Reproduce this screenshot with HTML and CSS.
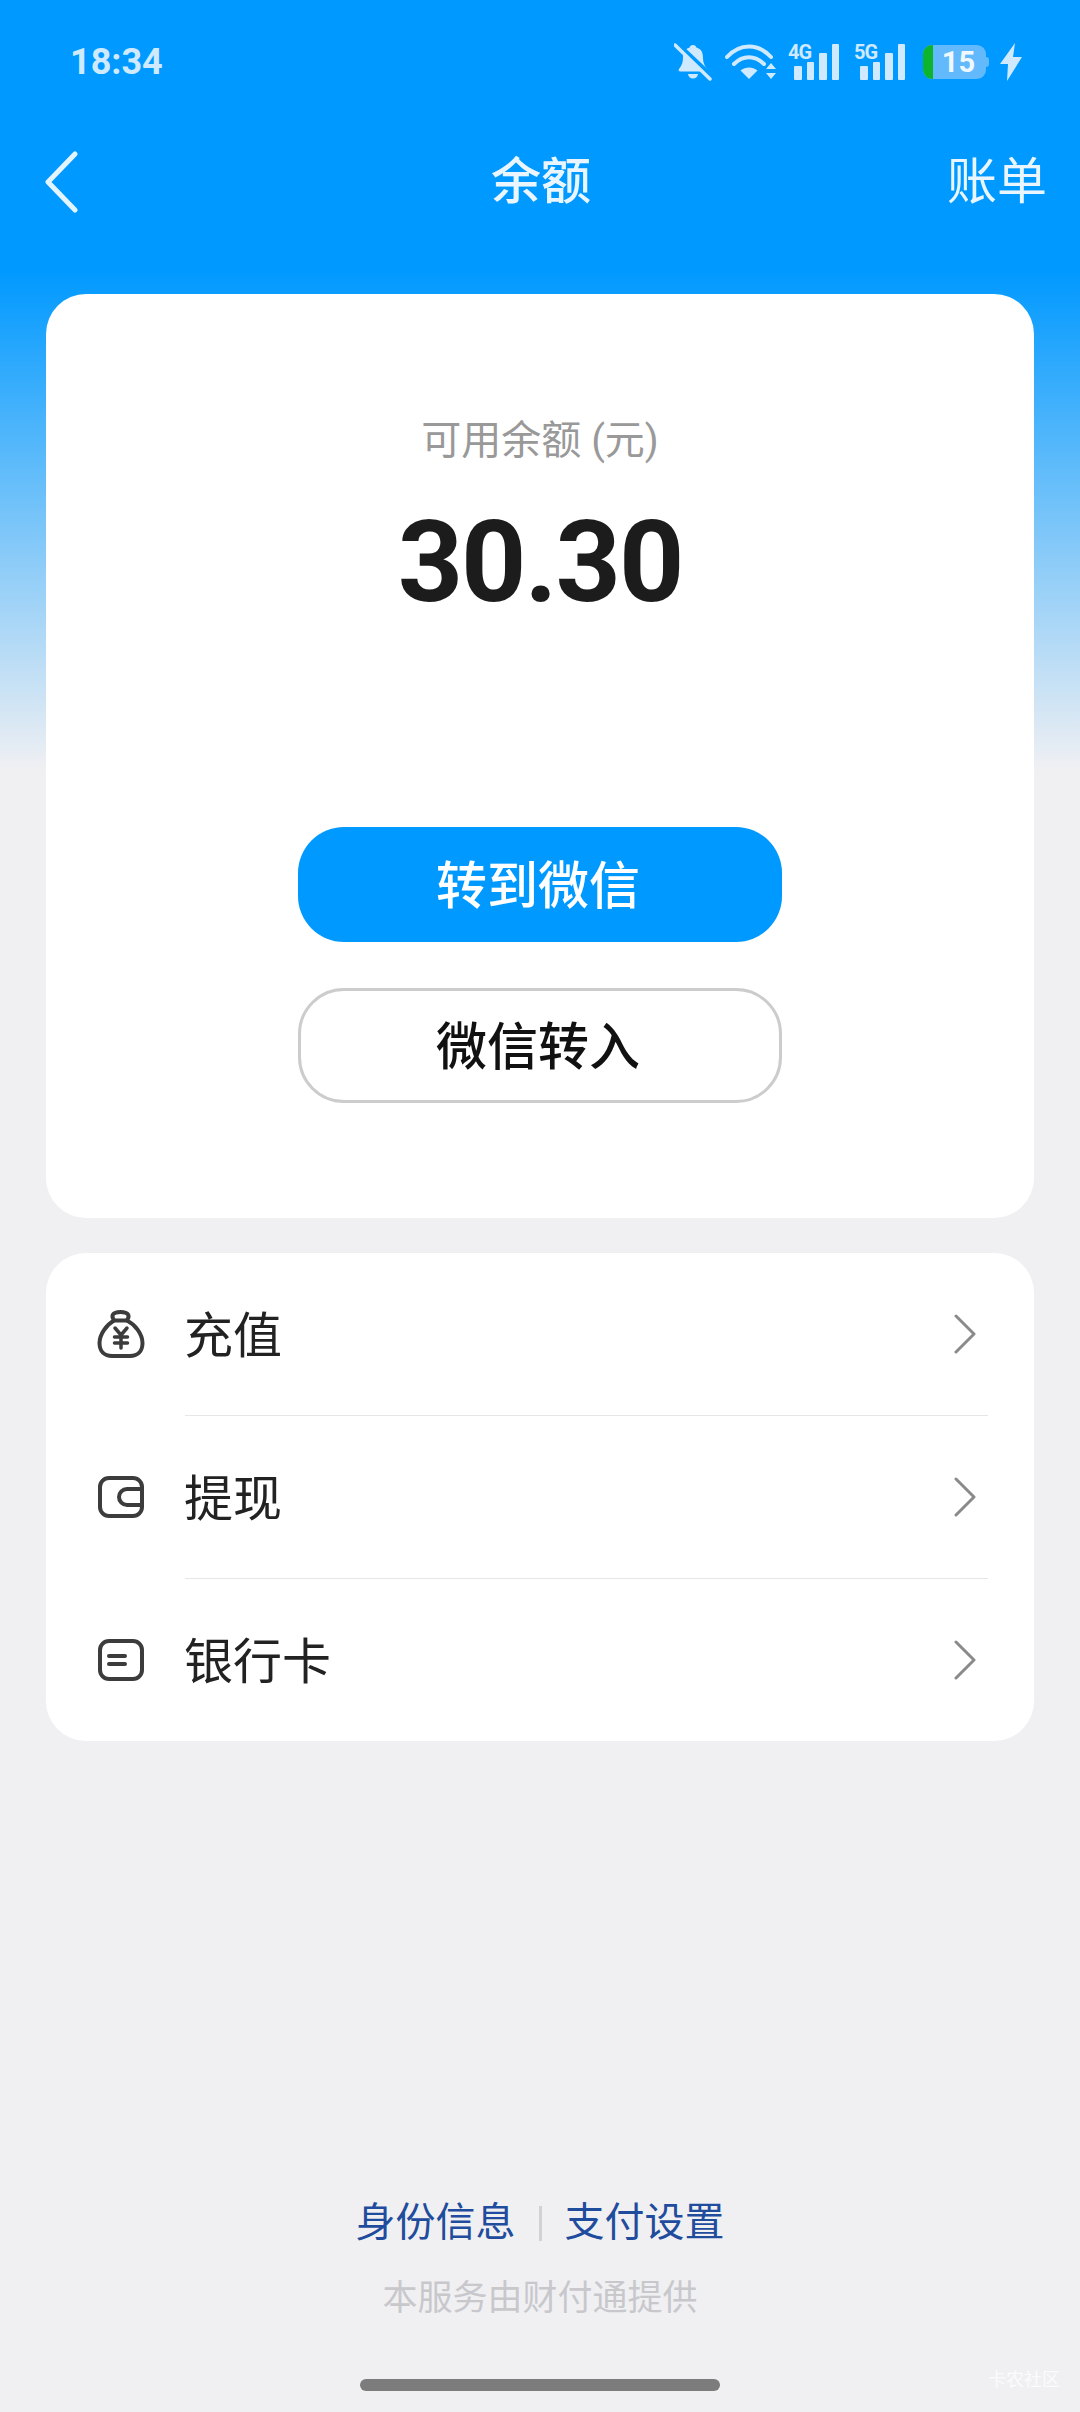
FILE: index.html
```html
<!DOCTYPE html>
<html lang="zh-CN">
<head>
    <meta charset="UTF-8">
    <meta name="viewport" content="width=device-width, initial-scale=1.0">
    <title>余额</title>
    <link rel="stylesheet" href="styles.css">
</head>
<body>
    <div class="page">
        <div class="status-bar">
            <span class="time">18:34</span>
            <div class="status-icons">
                <svg class="icon-bell" width="38" height="38" viewBox="0 0 38 38">
                    <path d="M19 2c2 0 3 1 3.400 2.600 5 1.400 6.600 5.400 6.600 10.400 0 4 1 7 4 11 1 1.500 0 2.500-1.500 2.500h-25c-1.500 0-2.500-1-1.500-2.500 3-4 4-7 4-11 0-5 1.600-9 6.600-10.400C16 3 17 2 19 2z" fill="#cfeaff"/>
                    <path d="M14 31h10c-.5 3-2.500 4.500-5 4.500s-4.500-1.500-5-4.500z" fill="#cfeaff"/>
                    <path d="M3 0l35 33" stroke="#0099ff" stroke-width="4"/>
                    <path d="M1 2l35 34" stroke="#cfeaff" stroke-width="3.500" stroke-linecap="round"/>
                </svg>
                <svg class="icon-wifi" width="52" height="36" viewBox="0 0 52 36">
                    <g fill="none" stroke="#cfeaff" stroke-width="4" stroke-linecap="round">
                        <path d="M2 13C15 -1 33 -1 46 13"/>
                        <path d="M9 20C18 11 30 11 39 20"/>
                    </g>
                    <path d="M24 35l-8.500-8.500c5-4 12-4 17 0z" fill="#cfeaff"/>
                    <path d="M46 19l5 6h-10zM46 35l5-6h-10z" fill="#cfeaff"/>
                </svg>
                <div class="signal">
                    <span class="signal-label">4G</span>
                    <svg width="46" height="36" viewBox="0 0 46 36">
                        <g fill="#cfeaff">
                            <rect x="0" y="22" width="8" height="14" rx="1"/>
                            <rect x="13" y="18" width="7" height="18" rx="1"/>
                            <rect x="25" y="9" width="8" height="27" rx="1"/>
                            <rect x="38" y="0" width="7" height="36" rx="1"/>
                        </g>
                    </svg>
                </div>
                <div class="signal">
                    <span class="signal-label">5G</span>
                    <svg width="46" height="36" viewBox="0 0 46 36">
                        <g fill="#cfeaff">
                            <rect x="0" y="22" width="8" height="14" rx="1"/>
                            <rect x="13" y="18" width="7" height="18" rx="1"/>
                            <rect x="25" y="9" width="8" height="27" rx="1"/>
                            <rect x="38" y="0" width="7" height="36" rx="1"/>
                        </g>
                    </svg>
                </div>
                <div class="battery">
                    <span class="battery-fill"></span>
                    <span class="battery-num">15</span>
                    <span class="battery-nub"></span>
                </div>
                <svg width="22" height="38" viewBox="0 0 22 38">
                    <path d="M15 0L0 21h8l-1 17L22 14h-9z" fill="#cfeaff"/>
                </svg>
            </div>
        </div>

        <div class="nav">
            <svg class="nav-back" width="34" height="62" viewBox="0 0 34 62">
                <path d="M30 3L3 31l27 28" fill="none" stroke="#e4f4ff" stroke-width="5" stroke-linecap="round" stroke-linejoin="round"/>
            </svg>
            <div class="nav-title">余额</div>
            <div class="nav-action">账单</div>
        </div>

        <div class="card balance-card">
            <div class="balance-label">可用余额 (元)</div>
            <div class="balance-amount">30.30</div>
            <button class="btn btn-primary">转到微信</button>
            <button class="btn btn-outline">微信转入</button>
        </div>

        <div class="card menu-card">
            <div class="menu-row">
                <svg class="menu-icon" width="48" height="48" viewBox="0 0 48 48" fill="none" stroke="#3c3c3c" stroke-width="4" stroke-linecap="round" stroke-linejoin="round">
                    <path d="M17 10.500C14 6 15 2 23.500 2S33 6 30 10.500C38 14.500 45.500 24 45.500 33c0 9-5.500 13-12.500 13H15C8 46 2.500 42 2.500 33 2.500 24 10 14.500 17 10.500z"/>
                    <path d="M17 10.500h13"/>
                    <path d="M18 18l6 7 6-7M17.500 27h13M17.500 33h13M24 25v13" stroke-width="3.500"/>
                </svg>
                <span class="menu-text">充值</span>
                <svg class="menu-arrow" width="22" height="40" viewBox="0 0 22 40">
                    <path d="M2 2l18 18L2 38" fill="none" stroke="#8a8a8a" stroke-width="3" stroke-linecap="round" stroke-linejoin="round"/>
                </svg>
            </div>
            <div class="menu-sep"></div>
            <div class="menu-row">
                <svg class="menu-icon" width="48" height="42" viewBox="0 0 48 42" fill="none" stroke="#3c3c3c" stroke-width="4" stroke-linecap="round" stroke-linejoin="round">
                    <rect x="3" y="2" width="42" height="38" rx="9"/>
                    <path d="M45 13H30a8 8 0 0 0 0 16h15"/>
                </svg>
                <span class="menu-text">提现</span>
                <svg class="menu-arrow" width="22" height="40" viewBox="0 0 22 40">
                    <path d="M2 2l18 18L2 38" fill="none" stroke="#8a8a8a" stroke-width="3" stroke-linecap="round" stroke-linejoin="round"/>
                </svg>
            </div>
            <div class="menu-sep"></div>
            <div class="menu-row">
                <svg class="menu-icon" width="48" height="42" viewBox="0 0 48 42" fill="none" stroke="#3c3c3c" stroke-width="4" stroke-linecap="round" stroke-linejoin="round">
                    <rect x="3" y="2" width="42" height="38" rx="9"/>
                    <path d="M12 17h16M12 25h16"/>
                </svg>
                <span class="menu-text">银行卡</span>
                <svg class="menu-arrow" width="22" height="40" viewBox="0 0 22 40">
                    <path d="M2 2l18 18L2 38" fill="none" stroke="#8a8a8a" stroke-width="3" stroke-linecap="round" stroke-linejoin="round"/>
                </svg>
            </div>
        </div>

        <div class="footer">
            <div class="footer-links">
                <span class="footer-link">身份信息</span>
                <span class="footer-divider"></span>
                <span class="footer-link">支付设置</span>
            </div>
            <div class="footer-note">本服务由财付通提供</div>
            <div class="home-bar"></div>
        </div>

        <div class="watermark">卡农社区</div>
    </div>
</body>
</html>
```

FILE: styles.css
```css
html, body {
    margin: 0;
    padding: 0;
}
body {
    font-family: Roboto, "Noto Sans CJK SC", sans-serif;
    background-color: #F0F0F3;
}
.page {
    position: relative;
    width: 1080px;
    height: 2412px;
    overflow: hidden;
    display: flex;
    flex-direction: column;
    background: linear-gradient(#0099FF 270px, #F0F0F3 770px);
}

/* status bar */
.status-bar {
    display: flex;
    justify-content: space-between;
    align-items: center;
    height: 44px;
    padding: 40px 58px 0 70px;
    color: #CFEAFF;
}
.time {
    font-size: 36px;
    font-weight: 700;
    line-height: 44px;
}
.status-icons {
    display: flex;
    align-items: center;
}
.icon-bell {
    margin-right: 13px;
}
.icon-wifi {
    margin-right: 11px;
}
.signal {
    position: relative;
    width: 46px;
    height: 36px;
    padding-left: 6px;
    margin-right: 14px;
}
.signal-label {
    position: absolute;
    left: 0;
    top: -1px;
    font-size: 20px;
    font-weight: 700;
    line-height: 18px;
    letter-spacing: -1px;
}
.battery {
    position: relative;
    display: flex;
    align-items: center;
    justify-content: center;
    width: 63px;
    height: 34px;
    margin: 0 14px 0 3px;
    padding-left: 8px;
    box-sizing: border-box;
    background: #62B9FB;
    border-radius: 9px;
}
.battery-fill {
    position: absolute;
    left: 0;
    top: 0;
    bottom: 0;
    width: 10px;
    background: #0DB52E;
    border-radius: 9px 0 0 9px;
}
.battery-num {
    color: #F0F8FF;
    font-size: 29px;
    font-weight: 700;
    line-height: 34px;
}
.battery-nub {
    position: absolute;
    right: -3px;
    top: 12px;
    width: 3px;
    height: 10px;
    background: #62B9FB;
    border-radius: 0 3px 3px 0;
}

/* nav */
.nav {
    display: grid;
    grid-template-columns: 1fr auto 1fr;
    align-items: center;
    height: 124px;
    margin-top: 36px;
    padding: 0 33px 0 45px;
    color: #EAF6FF;
}
.nav-title {
    font-size: 50px;
    font-weight: 500;
    line-height: 60px;
    margin-left: -10px;
}
.nav-action {
    justify-self: end;
    font-size: 50px;
    line-height: 60px;
}

/* cards */
.card {
    width: 988px;
    margin-left: 46px;
    background: #FFFFFF;
    border-radius: 40px;
    box-sizing: border-box;
}
.balance-card {
    display: flex;
    flex-direction: column;
    align-items: center;
    margin-top: 50px;
    padding: 122px 0 115px;
}
.balance-label {
    color: #999999;
    font-size: 40px;
    line-height: 50px;
}
.balance-amount {
    margin: 31px 0 200px;
    color: #1C1C1C;
    font-size: 114px;
    font-weight: 700;
    line-height: 130px;
    letter-spacing: -2px;
}
.btn {
    display: block;
    width: 484px;
    height: 115px;
    border-radius: 46px;
    font-family: inherit;
    font-size: 51px;
    font-weight: 500;
    padding: 0 4px 5px 0;
    box-sizing: border-box;
}
.btn-primary {
    background-color: #0099FF;
    border: none;
    color: white;
}
.btn-outline {
    margin-top: 46px;
    background-color: white;
    border: 3px solid #CCCCCC;
    color: #111111;
}
.menu-card {
    margin-top: 35px;
}
.menu-row {
    display: flex;
    align-items: center;
    height: 162px;
    padding: 0 58px 0 51px;
}
.menu-icon {
    flex: none;
    margin-right: 39px;
}
.menu-text {
    flex: 1;
    padding-top: 5px;
    color: #222222;
    font-size: 49px;
    line-height: 60px;
}
.menu-sep {
    height: 1px;
    margin: 0 46px 0 139px;
    background: #E6E6E8;
}

/* footer */
.footer {
    margin-top: auto;
    padding-bottom: 21px;
    display: flex;
    flex-direction: column;
    align-items: center;
}
.footer-links {
    display: flex;
    align-items: center;
    gap: 23px;
}
.footer-link {
    color: #1F4C9C;
    font-size: 40px;
    line-height: 50px;
}
.footer-divider {
    width: 3px;
    height: 35px;
    background: #D2D2D6;
}
.footer-note {
    margin-top: 26px;
    color: #C8C8CC;
    font-size: 35px;
    line-height: 50px;
}
.home-bar {
    width: 360px;
    height: 12px;
    margin-top: 55px;
    border-radius: 6px;
    background: #7C7C7C;
}
.watermark {
    position: absolute;
    right: 20px;
    bottom: 21px;
    color: #FBFBFC;
    font-size: 18px;
    line-height: 22px;
}
```
